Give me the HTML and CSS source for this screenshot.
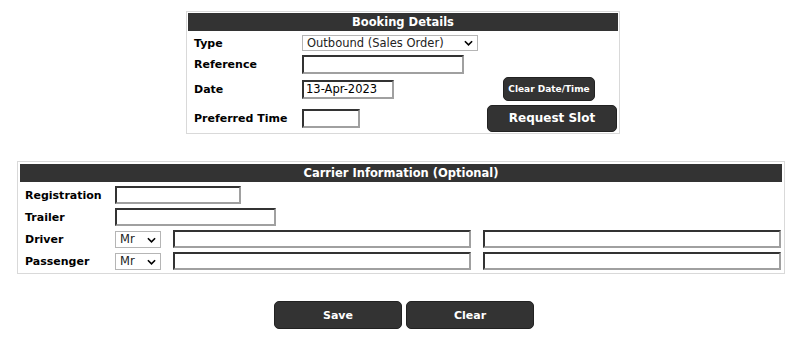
FILE: index.html
```html
<!DOCTYPE html>
<html lang="en">
<head>
    <meta charset="UTF-8">
    <title>Booking</title>
    <link rel="stylesheet" href="styles.css">
</head>
<body>
    <div class="page">
        <!-- booking details -->
        <div class="panel booking">
            <div class="panel-head">Booking Details</div>
            <div class="booking-grid">
                <label class="lbl">Type</label>
                <span class="sel sel-type">
                    <select><option>Outbound (Sales Order)</option></select>
                    <svg viewBox="0 0 10 6"><path d="M1 1l4 4 4-4" fill="none" stroke="#000" stroke-width="1.8"/></svg>
                </span>
                <span></span>

                <label class="lbl">Reference</label>
                <input class="txt w-ref" type="text">
                <span></span>

                <label class="lbl">Date</label>
                <input class="txt w-date" type="text" value="13-Apr-2023">
                <button class="btn btn-small">Clear Date/Time</button>

                <label class="lbl">Preferred Time</label>
                <input class="txt w-time" type="text">
                <button class="btn btn-slot">Request Slot</button>
            </div>
        </div>

        <!-- carrier -->
        <div class="panel carrier">
            <div class="panel-head">Carrier Information (Optional)</div>
            <div class="carrier-grid">
                <label class="lbl">Registration</label>
                <input class="txt w-reg span-all" type="text">

                <label class="lbl">Trailer</label>
                <input class="txt w-trailer span-all" type="text">

                <label class="lbl">Driver</label>
                <span class="sel sel-title">
                    <select><option>Mr</option><option>Mrs</option><option>Ms</option></select>
                    <svg viewBox="0 0 10 6"><path d="M1 1l4 4 4-4" fill="none" stroke="#000" stroke-width="1.8"/></svg>
                </span>
                <input class="txt" type="text">
                <input class="txt" type="text">

                <label class="lbl">Passenger</label>
                <span class="sel sel-title">
                    <select><option>Mr</option><option>Mrs</option><option>Ms</option></select>
                    <svg viewBox="0 0 10 6"><path d="M1 1l4 4 4-4" fill="none" stroke="#000" stroke-width="1.8"/></svg>
                </span>
                <input class="txt" type="text">
                <input class="txt" type="text">
            </div>
        </div>

        <div class="actions">
            <button class="btn btn-main">Save</button>
            <button class="btn btn-main">Clear</button>
        </div>
    </div>
</body>
</html>
```

FILE: styles.css
```css
body {
    margin: 0;
    background-color: #fff;
    color: #000;
    font-family: "DejaVu Sans", Verdana, sans-serif;
    font-size: 11px;
}

.page {
    padding: 11px 15px 0 17px;
}

.panel {
    border: 1px solid #d9d9d9;
    background-color: #fff;
}

.panel-head {
    background-color: #333;
    color: #fff;
    font-weight: bold;
    font-size: 11.5px;
    height: 18px;
    line-height: 18px;
    text-align: center;
}

.booking {
    width: 430px;
    padding: 1px;
    margin-left: 169px;
}

.booking-grid {
    display: grid;
    grid-template-columns: 108px 185px 130px;
    grid-template-rows: 18px 20px 26px 28px;
    row-gap: 2px;
    align-items: center;
    justify-items: start;
    padding-left: 6px;
    margin-top: 3px;
}

.carrier {
    padding: 2px;
    margin-top: 27px;
}

.carrier-grid {
    display: grid;
    grid-template-columns: 83px 46px 298px 298px;
    grid-template-rows: repeat(4, 20px);
    column-gap: 12px;
    row-gap: 2px;
    align-items: center;
    justify-items: start;
    margin-top: 3px;
}

.carrier-grid .lbl {
    padding-left: 5px;
}

.span-all {
    grid-column: 2 / span 3;
}

.lbl {
    font-weight: bold;
    font-size: 11px;
    white-space: nowrap;
}

.txt {
    box-sizing: border-box;
    height: 19px;
    border: 2px solid;
    border-color: #333 #a0a0a0 #a0a0a0 #333;
    background-color: #fff;
    font-family: "DejaVu Sans", Verdana, sans-serif;
    font-size: 11.5px;
    padding: 0 2px;
    margin: 0;
    outline: none;
}

.carrier-grid .txt {
    height: 18px;
    width: 298px;
}

.carrier-grid .w-reg { width: 126px; }
.carrier-grid .w-trailer { width: 161px; }
.w-ref { width: 162px; }
.w-date { width: 92px; }
.w-time { width: 58px; }

.sel {
    position: relative;
    display: inline-block;
}

.sel select {
    appearance: none;
    -webkit-appearance: none;
    box-sizing: border-box;
    display: block;
    height: 16px;
    border: 1px solid #b5b5b5;
    border-radius: 0;
    background-color: #fff;
    color: #222;
    font-family: "DejaVu Sans", Verdana, sans-serif;
    font-size: 11.5px;
    line-height: 14px;
    padding: 0 0 0 4px;
    margin: 0;
}

.sel svg {
    position: absolute;
    right: 5px;
    top: 5px;
    width: 9px;
    height: 6px;
    pointer-events: none;
}

.sel-type select { width: 176px; }
.sel-title select { width: 46px; height: 17px; }
.sel-title svg { top: 6px; }

.btn {
    background-color: #333;
    color: #fff;
    border: 1px solid #222;
    border-radius: 5px;
    font-family: "DejaVu Sans", Verdana, sans-serif;
    font-weight: bold;
    cursor: pointer;
    padding: 0;
}

.btn-small {
    width: 92px;
    height: 24px;
    font-size: 9px;
    justify-self: center;
    margin-left: -6px;
}

.btn-slot {
    width: 130px;
    height: 27px;
    font-size: 12px;
}

.actions {
    display: flex;
    justify-content: center;
    gap: 4px;
    margin-top: 27px;
    padding-left: 6px;
}

.btn-main {
    width: 128px;
    height: 28px;
    font-size: 11px;
}
```
